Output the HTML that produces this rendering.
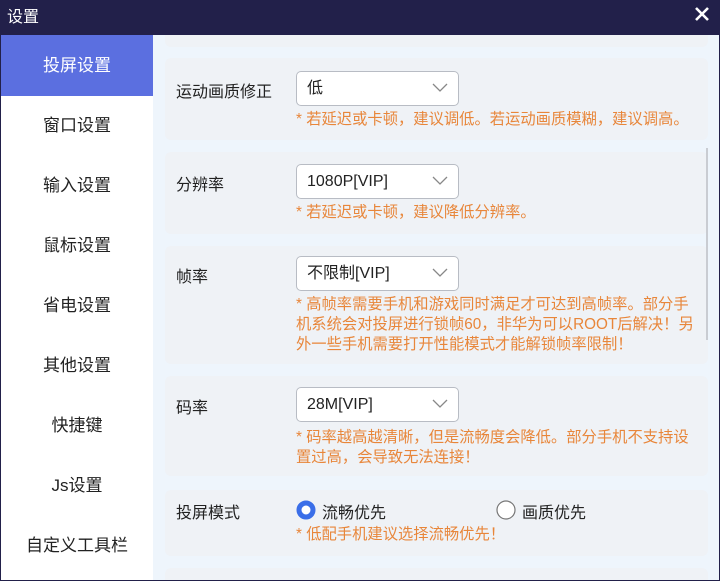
<!DOCTYPE html>
<html><head><meta charset="utf-8"><style>
*{margin:0;padding:0;box-sizing:border-box}
body{width:720px;height:581px;overflow:hidden;background:#22204a;font-family:"Liberation Sans","Noto Sans CJK SC",sans-serif;position:relative}
.title{position:absolute;left:0;top:0;width:720px;height:35px;background:#22204a;color:#fff;font-size:16px;line-height:35px;padding-left:7px}
.close{position:absolute;right:10px;top:6px;width:16px;height:16px}
.side{position:absolute;left:1px;top:35px;width:152px;height:545px;background:#fff;padding-top:1px}
.side div{height:60px;line-height:60px;text-align:center;font-size:17px;color:#222}
.side .act{background:#5b6fe0;color:#fff;margin-top:-1px;height:61px;padding-top:1px}
.main{position:absolute;left:153px;top:35px;width:566px;height:545px;background:#eef5fc;overflow:hidden}
.card{position:absolute;left:12px;width:543px;background:#eff2f6;border-radius:6px}
.lab{position:absolute;left:11px;font-size:16px;color:#222}
.sel{position:absolute;left:131px;width:163px;height:35px;background:#fff;border:1px solid #b8bcc4;border-radius:5px;font-size:16px;line-height:33px;padding-left:10px;color:#222}
.sel svg{position:absolute;right:10px;top:11px}
.hint{position:absolute;left:131px;font-size:15.3px;line-height:20px;color:#e8863a;width:408px}
.sb{position:absolute;left:553px;top:113px;width:2px;height:192px;background:#c9ccd2}
</style></head><body>
<div class="title">设置</div>
<svg class="close" viewBox="0 0 16 16"><path d="M2 2L14 14M14 2L2 14" stroke="#fff" stroke-width="2.6"/></svg>
<div class="side">
<div class="act">投屏设置</div><div>窗口设置</div><div>输入设置</div><div>鼠标设置</div><div>省电设置</div><div>其他设置</div><div>快捷键</div><div>Js设置</div><div>自定义工具栏</div>
</div>
<div class="main">
<div class="card" style="top:-20px;height:32px"></div>
<div class="card" style="top:23px;height:82px">
<div class="lab" style="top:20px">运动画质修正</div>
<div class="sel" style="top:13px">低<svg width="16" height="10" viewBox="0 0 16 10"><path d="M1 1L8 8L15 1" fill="none" stroke="#888" stroke-width="1.3"/></svg></div>
<div class="hint" style="top:52px">* 若延迟或卡顿，建议调低。若运动画质模糊，建议调高。</div>
</div>
<div class="card" style="top:117px;height:82px">
<div class="lab" style="top:19px">分辨率</div>
<div class="sel" style="top:12px">1080P[VIP]<svg width="16" height="10" viewBox="0 0 16 10"><path d="M1 1L8 8L15 1" fill="none" stroke="#888" stroke-width="1.3"/></svg></div>
<div class="hint" style="top:51px">* 若延迟或卡顿，建议降低分辨率。</div>
</div>
<div class="card" style="top:211px;height:118px">
<div class="lab" style="top:17px">帧率</div>
<div class="sel" style="top:10px">不限制[VIP]<svg width="16" height="10" viewBox="0 0 16 10"><path d="M1 1L8 8L15 1" fill="none" stroke="#888" stroke-width="1.3"/></svg></div>
<div class="hint" style="top:49px">* 高帧率需要手机和游戏同时满足才可达到高帧率。部分手<br>机系统会对投屏进行锁帧60，非华为可以ROOT后解决！另<br>外一些手机需要打开性能模式才能解锁帧率限制！</div>
</div>
<div class="card" style="top:341px;height:100px">
<div class="lab" style="top:18px">码率</div>
<div class="sel" style="top:11px">28M[VIP]<svg width="16" height="10" viewBox="0 0 16 10"><path d="M1 1L8 8L15 1" fill="none" stroke="#888" stroke-width="1.3"/></svg></div>
<div class="hint" style="top:52px">* 码率越高越清晰，但是流畅度会降低。部分手机不支持设<br>置过高，会导致无法连接！</div>
</div>
<div class="card" style="top:455px;height:66px">
<div class="lab" style="top:9px">投屏模式</div>
<svg style="position:absolute;left:131px;top:10px" width="20" height="20"><circle cx="10" cy="10" r="7" fill="#fff" stroke="#3a6ee8" stroke-width="5"/></svg>
<div class="lab" style="top:9px;left:157px">流畅优先</div>
<svg style="position:absolute;left:331px;top:10px" width="20" height="20"><circle cx="10" cy="10" r="9" fill="#fff" stroke="#777" stroke-width="1.2"/></svg>
<div class="lab" style="top:9px;left:357px">画质优先</div>
<div class="hint" style="top:35px">* 低配手机建议选择流畅优先！</div>
</div>
<div class="card" style="top:533px;height:40px"></div>
<div class="sb"></div>
</div>
</body></html>
